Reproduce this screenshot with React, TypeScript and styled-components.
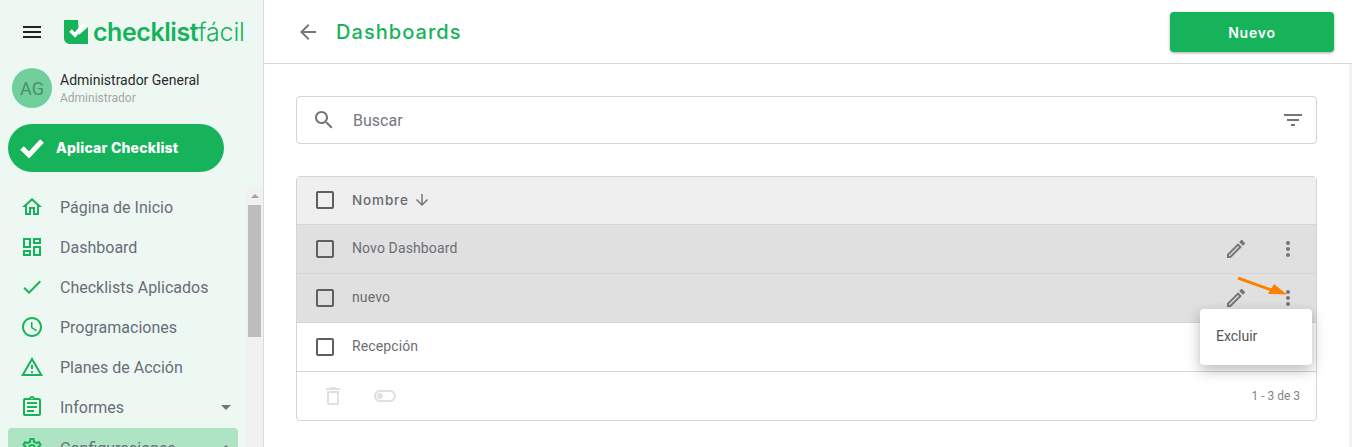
import { FC } from "react";
import styled, { createGlobalStyle } from "styled-components";

const GREEN = "#16b35b";

const paths = {
  menu: "M3 18h18v-2H3v2zm0-5h18v-2H3v2zm0-7v2h18V6H3z",
  home: "M12 5.69l5 4.5V18h-2v-6H9v6H7v-7.81l5-4.5M12 3L2 12h3v8h6v-6h2v6h6v-8h3L12 3z",
  dashboard:
    "M19 5v2h-4V5h4M9 5v6H5V5h4m10 8v6h-4v-6h4M9 17v2H5v-2h4M21 3h-8v6h8V3zM11 3H3v10h8V3zm10 8h-8v10h8V11zm-10 4H3v6h8v-6z",
  check: "M9 16.17L4.83 12l-1.42 1.41L9 19 21 7l-1.41-1.41z",
  clock:
    "M11.99 2C6.47 2 2 6.48 2 12s4.47 10 9.99 10C17.52 22 22 17.52 22 12S17.52 2 11.99 2zM12 20c-4.42 0-8-3.58-8-8s3.58-8 8-8 8 3.58 8 8-3.58 8-8 8zm.5-13H11v6l5.25 3.15.75-1.23-4.5-2.67z",
  warning:
    "M12 5.99L19.53 19H4.47L12 5.99M12 2L1 21h22L12 2zm1 14h-2v2h2v-2zm0-6h-2v4h2v-4z",
  report:
    "M7 15h7v2H7zm0-4h10v2H7zm0-4h10v2H7zm12-4h-4.18C14.4 1.84 13.3 1 12 1c-1.3 0-2.4.84-2.82 2H5c-.14 0-.27.01-.4.04-.39.08-.74.28-1.01.55-.18.18-.33.4-.43.64-.1.23-.16.49-.16.77v14c0 .27.06.54.16.78s.25.45.43.64c.27.27.62.47 1.01.55.13.02.26.03.4.03h14c1.1 0 2-.9 2-2V5c0-1.1-.9-2-2-2zm-7-.25c.41 0 .75.34.75.75s-.34.75-.75.75-.75-.34-.75-.75.34-.75.75-.75zM19 19H5V5h14v14z",
  settings:
    "M19.43 12.98c.04-.32.07-.64.07-.98 0-.34-.03-.66-.07-.98l2.11-1.65c.19-.15.24-.42.12-.64l-2-3.46c-.09-.16-.26-.25-.44-.25-.06 0-.12.01-.17.03l-2.49 1c-.52-.4-1.08-.73-1.69-.98l-.38-2.65C14.46 2.18 14.25 2 14 2h-4c-.25 0-.46.18-.49.42l-.38 2.65c-.61.25-1.17.59-1.69.98l-2.49-1c-.06-.02-.12-.03-.18-.03-.17 0-.34.09-.43.25l-2 3.46c-.13.22-.07.49.12.64l2.11 1.65c-.04.32-.07.65-.07.98 0 .33.03.66.07.98l-2.11 1.65c-.19.15-.24.42-.12.64l2 3.46c.09.16.26.25.44.25.06 0 .12-.01.17-.03l2.49-1c.52.4 1.08.73 1.69.98l.38 2.65c.03.24.24.42.49.42h4c.25 0 .46-.18.49-.42l.38-2.65c.61-.25 1.17-.59 1.69-.98l2.49 1c.06.02.12.03.18.03.17 0 .34-.09.43-.25l2-3.46c.12-.22.07-.49-.12-.64l-2.11-1.65zm-1.98-1.71c.04.31.05.52.05.73 0 .21-.02.43-.05.73l-.14 1.13.89.7 1.08.84-.7 1.21-1.27-.51-1.04-.42-.9.68c-.43.32-.84.56-1.25.73l-1.06.43-.16 1.13-.2 1.35h-1.4l-.19-1.35-.16-1.13-1.06-.43c-.43-.18-.83-.41-1.23-.71l-.91-.7-1.06.43-1.27.51-.7-1.21 1.08-.84.89-.7-.14-1.13c-.03-.31-.05-.54-.05-.74s.02-.43.05-.73l.14-1.13-.89-.7-1.08-.84.7-1.21 1.27.51 1.04.42.9-.68c.43-.32.84-.56 1.25-.73l1.06-.43.16-1.13.2-1.35h1.39l.19 1.35.16 1.13 1.06.43c.43.18.83.41 1.23.71l.91.7 1.06-.43 1.27-.51.7 1.21-1.07.85-.89.7.14 1.13zM12 8c-2.21 0-4 1.79-4 4s1.79 4 4 4 4-1.79 4-4-1.79-4-4-4zm0 6c-1.1 0-2-.9-2-2s.9-2 2-2 2 .9 2 2-.9 2-2 2z",
  back: "M20 11H7.83l5.59-5.59L12 4l-8 8 8 8 1.41-1.41L7.83 13H20v-2z",
  search:
    "M15.5 14h-.79l-.28-.27C15.41 12.59 16 11.11 16 9.5 16 5.91 13.09 3 9.5 3S3 5.91 3 9.5 5.91 16 9.5 16c1.61 0 3.09-.59 4.23-1.57l.27.28v.79l5 4.99L20.49 19l-4.99-5zm-6 0C7.01 14 5 11.99 5 9.5S7.01 5 9.5 5 14 7.01 14 9.5 11.99 14 9.5 14z",
  filter: "M10 18h4v-2h-4v2zM3 6v2h18V6H3zm3 7h12v-2H6v2z",
  down: "M20 12l-1.41-1.41L13 16.17V4h-2v12.17l-5.58-5.59L4 12l8 8 8-8z",
  edit: "M3 17.25V21h3.75L17.81 9.94l-3.75-3.75L3 17.25zM5.92 19H5v-.92l9.06-9.06.92.92L5.92 19zM20.71 7.04c.39-.39.39-1.02 0-1.41l-2.34-2.34c-.2-.2-.45-.29-.71-.29s-.51.1-.7.29l-1.83 1.83 3.75 3.75 1.83-1.83z",
  more: "M12 8c1.1 0 2-.9 2-2s-.9-2-2-2-2 .9-2 2 .9 2 2 2zm0 2c-1.1 0-2 .9-2 2s.9 2 2 2 2-.9 2-2-.9-2-2-2zm0 6c-1.1 0-2 .9-2 2s.9 2 2 2 2-.9 2-2-.9-2-2-2z",
  trash:
    "M6 19c0 1.1.9 2 2 2h8c1.1 0 2-.9 2-2V7H6v12zM8 9h8v10H8V9zm7.5-5l-1-1h-5l-1 1H5v2h14V4z",
  toggle:
    "M17 6H7c-3.31 0-6 2.69-6 6s2.69 6 6 6h10c3.31 0 6-2.69 6-6s-2.69-6-6-6zm0 10H7c-2.21 0-4-1.79-4-4s1.79-4 4-4h10c2.21 0 4 1.79 4 4s-1.79 4-4 4zM7 9c-1.66 0-3 1.34-3 3s1.34 3 3 3 3-1.34 3-3-1.34-3-3-3z",
  box: "M19 5v14H5V5h14m0-2H5c-1.1 0-2 .9-2 2v14c0 1.1.9 2 2 2h14c1.1 0 2-.9 2-2V5c0-1.1-.9-2-2-2z",
  caretDown: "M7 10l5 5 5-5z",
  caretUp: "M7 14l5-5 5 5z",
};

const GlobalStyle = createGlobalStyle`
  html, body {
    margin: 0;
    height: 100%;
    overflow: hidden;
    background: #fff;
    font-family: Roboto, "Liberation Sans", sans-serif;
  }
`;

const Page = styled.div`
  display: flex;
  width: 1352px;
  height: 447px;
  overflow: hidden;
`;

const Sidebar = styled.aside`
  flex: 0 0 264px;
  box-sizing: border-box;
  height: 447px;
  background: #eef8f3;
  border-right: 1px solid #dcdcdc;
  display: flex;
  flex-direction: column;
  overflow: hidden;
`;

const Brand = styled.div`
  height: 64px;
  flex: none;
  display: flex;
  align-items: center;
  padding-left: 20px;
  gap: 20px;
`;

const Logo = styled.div`
  display: flex;
  align-items: center;
  gap: 5px;
`;

const LogoText = styled.span`
  font-family: Inter, sans-serif;
  font-size: 25px;
  font-weight: 600;
  letter-spacing: -0.45px;
  color: ${GREEN};

  b {
    font-weight: 300;
    letter-spacing: -0.2px;
  }
`;

const Svg = styled.svg<{ $size?: number; $color: string }>`
  display: block;
  flex: none;
  width: ${(p) => p.$size ?? 24}px;
  height: ${(p) => p.$size ?? 24}px;
  fill: ${(p) => p.$color};
`;

const Icon: FC<{ d: string; size?: number; color: string }> = ({ d, size, color }) => (
  <Svg viewBox="0 0 24 24" $size={size} $color={color}>
    <path d={d} />
  </Svg>
);

const UserRow = styled.div`
  display: flex;
  align-items: center;
  gap: 8px;
  padding: 4px 0 0 12px;
`;

const Avatar = styled.div`
  width: 40px;
  height: 40px;
  border-radius: 50%;
  background: #70cf9a;
  color: #4a8f69;
  font-size: 18px;
  display: flex;
  align-items: center;
  justify-content: center;
`;

const UserName = styled.div`
  font-size: 14px;
  line-height: 18px;
  color: #2b2b2b;
`;

const UserRole = styled.div`
  font-size: 12px;
  line-height: 16px;
  margin-top: 1px;
  color: #a3a8a6;
`;

const ApplyButton = styled.div`
  margin: 16px 0 0 8px;
  width: 216px;
  height: 48px;
  flex: none;
  border-radius: 24px;
  background: ${GREEN};
  color: #fff;
  font-family: Inter, sans-serif;
  font-weight: 800;
  font-size: 14px;
  letter-spacing: 0.2px;
  display: flex;
  align-items: center;
  padding: 0 0 1px 12px;
  box-sizing: border-box;
  gap: 12px;
`;

const NavArea = styled.div`
  margin-top: 15px;
  flex: 1;
  display: flex;
  min-height: 0;
`;

const NavList = styled.nav`
  flex: 1;
  min-width: 0;
  padding-right: 8px;
`;

const NavItem = styled.div<{ $active?: boolean }>`
  height: 40px;
  margin-left: 8px;
  padding: 0 0 0 12px;
  display: flex;
  align-items: center;
  gap: 16px;
  border-radius: 4px;
  font-size: 16px;
  color: #666e78;
  background: ${(p) => (p.$active ? "#aee3c3" : "transparent")};
  margin-top: ${(p) => (p.$active ? "1px" : "0")};
`;

const NavLabel = styled.span`
  flex: 1;
`;

const ScrollTrack = styled.div`
  flex: 0 0 17px;
  margin-top: 1px;
  background: #f1f1f1;
  display: flex;
  flex-direction: column;
  align-items: center;
`;

const ScrollArrow = styled.div`
  margin-top: 6px;
  width: 0;
  height: 0;
  border-left: 4px solid transparent;
  border-right: 4px solid transparent;
  border-bottom: 4px solid #a3a3a3;
`;

const ScrollThumb = styled.div`
  margin-top: 7px;
  width: 13px;
  height: 132px;
  background: #bdbdbd;
`;

const Main = styled.main`
  flex: 1;
  min-width: 0;
  display: flex;
  flex-direction: column;
`;

const TopBar = styled.header`
  height: 64px;
  flex: none;
  box-sizing: border-box;
  border-bottom: 1px solid #d9d9d9;
  display: flex;
  align-items: center;
  padding: 0 18px 0 32px;
  gap: 16px;
`;

const Title = styled.h1`
  flex: 1;
  margin: 0;
  font-family: Inter, sans-serif;
  font-size: 20px;
  font-weight: 500;
  letter-spacing: 1.05px;
  color: ${GREEN};
`;

const NewButton = styled.div`
  width: 164px;
  height: 40px;
  margin-top: 1px;
  border-radius: 4px;
  background: ${GREEN};
  color: #fff;
  font-family: Inter, sans-serif;
  font-weight: 600;
  font-size: 14px;
  letter-spacing: 0.8px;
  display: flex;
  align-items: center;
  justify-content: center;
  box-shadow: 0 1px 3px rgba(0, 0, 0, 0.35);
`;

const Body = styled.div`
  flex: 1;
  display: flex;
  min-height: 0;
`;

const Content = styled.div`
  flex: 1;
  min-width: 0;
  padding: 32px 32px 0 32px;
`;

const PageScrollTrack = styled.div`
  flex: 0 0 3px;
  background: #f4f4f4;
`;

const SearchBox = styled.div`
  height: 48px;
  box-sizing: border-box;
  border: 1px solid #d5d5d5;
  border-radius: 4px;
  display: flex;
  align-items: center;
  padding: 0 11px 0 15px;
`;

const SearchText = styled.span`
  flex: 1;
  margin-left: 17px;
  font-size: 16px;
  color: #72787e;
`;

const TableCard = styled.div`
  position: relative;
  margin-top: 32px;
  box-sizing: border-box;
  border: 1px solid #d5d5d5;
  border-radius: 4px;
`;

const Row = styled.div<{ $tone: "head" | "selected" | "plain" }>`
  height: ${(p) => (p.$tone === "head" ? "48px" : "49px")};
  box-sizing: border-box;
  display: flex;
  align-items: center;
  padding: 0 16px ${(p) => (p.$tone === "head" ? "2px" : "0")};
  gap: 15px;
  border-bottom: 1px solid #d5d5d5;
  background: ${(p) =>
    p.$tone === "head" ? "#efefef" : p.$tone === "selected" ? "#e0e0e0" : "#fff"};
`;

const HeadLabel = styled.span`
  font-family: Inter, sans-serif;
  font-size: 13.5px;
  font-weight: 500;
  letter-spacing: 0.85px;
  color: #666b72;
`;

const HeadCell = styled.div`
  flex: 1;
  display: flex;
  align-items: center;
  gap: 4px;
`;

const CellText = styled.span`
  flex: 1;
  font-size: 14px;
  line-height: 18px;
  padding-bottom: 2px;
  letter-spacing: 0.12px;
  color: #6a6f75;
`;

const Actions = styled.div`
  display: flex;
  gap: 28px;
`;

const TableFooter = styled.div`
  height: 48px;
  display: flex;
  align-items: center;
  padding: 0 16px 0 24px;
  gap: 28px;
`;

const Pagination = styled.span`
  margin-left: auto;
  font-size: 12px;
  color: #80858a;
`;

const RowMenu = styled.div`
  position: absolute;
  top: 132px;
  right: 4px;
  width: 112px;
  height: 56px;
  box-sizing: border-box;
  background: #fff;
  border-radius: 4px;
  box-shadow: 0 5px 14px rgba(0, 0, 0, 0.28);
  display: flex;
  align-items: center;
  padding: 0 0 2px 16px;
  font-size: 14px;
  color: #555;
`;

const Pointer = styled.svg`
  position: absolute;
  top: 100px;
  right: 26px;
  width: 54px;
  height: 22px;
`;

const navItems = [
  { label: "Página de Inicio", d: paths.home },
  { label: "Dashboard", d: paths.dashboard },
  { label: "Checklists Aplicados", d: paths.check },
  { label: "Programaciones", d: paths.clock },
  { label: "Planes de Acción", d: paths.warning },
  { label: "Informes", d: paths.report, caret: paths.caretDown },
  { label: "Configuraciones", d: paths.settings, caret: paths.caretUp, active: true },
];

const rows = [
  { name: "Novo Dashboard", selected: true },
  { name: "nuevo", selected: true },
  { name: "Recepción", selected: false },
];

const App: FC = () => {
  return (
    <>
      <GlobalStyle />
      <Page>
        <Sidebar>
          <Brand>
            <Icon d={paths.menu} color="#222" />
            <Logo>
              <svg width="24" height="24" viewBox="0 0 24 24">
                <path d="M0 0H24V24H6C2.5 24 0 21.5 0 18Z" fill={GREEN} />
                <path d="M14 0H24V7L15 15Z" fill="#eef8f3" />
                <path
                  d="M6.5 10.5L11 15L20 4"
                  fill="none"
                  stroke="#fff"
                  strokeWidth="3.6"
                />
              </svg>
              <LogoText>
                checklist<b>fácil</b>
              </LogoText>
            </Logo>
          </Brand>
          <UserRow>
            <Avatar>AG</Avatar>
            <div>
              <UserName>Administrador General</UserName>
              <UserRole>Administrador</UserRole>
            </div>
          </UserRow>
          <ApplyButton>
            <svg width="24" height="24" viewBox="0 0 24 24">
              <path
                d="M2 12L9 19L22 5"
                fill="none"
                stroke="#fff"
                strokeWidth="5"
              />
            </svg>
            Aplicar Checklist
          </ApplyButton>
          <NavArea>
            <NavList>
              {navItems.map((item) => (
                <NavItem key={item.label} $active={item.active}>
                  <Icon d={item.d} color={GREEN} />
                  <NavLabel>{item.label}</NavLabel>
                  {item.caret && <Icon d={item.caret} color="#757575" />}
                </NavItem>
              ))}
            </NavList>
            <ScrollTrack>
              <ScrollArrow />
              <ScrollThumb />
            </ScrollTrack>
          </NavArea>
        </Sidebar>
        <Main>
          <TopBar>
            <Icon d={paths.back} color="#777" />
            <Title>Dashboards</Title>
            <NewButton>Nuevo</NewButton>
          </TopBar>
          <Body>
            <Content>
              <SearchBox>
                <Icon d={paths.search} color="#757575" />
                <SearchText>Buscar</SearchText>
                <Icon d={paths.filter} color="#757575" />
              </SearchBox>
              <TableCard>
                <Row $tone="head">
                  <Icon d={paths.box} color="#5f5f5f" />
                  <HeadCell>
                    <HeadLabel>Nombre</HeadLabel>
                    <Icon d={paths.down} size={18} color="#757575" />
                  </HeadCell>
                </Row>
                {rows.map((row) => (
                  <Row key={row.name} $tone={row.selected ? "selected" : "plain"}>
                    <Icon d={paths.box} color="#5f5f5f" />
                    <CellText>{row.name}</CellText>
                    {row.selected && (
                      <Actions>
                        <Icon d={paths.edit} color="#757575" />
                        <Icon d={paths.more} color="#757575" />
                      </Actions>
                    )}
                  </Row>
                ))}
                <TableFooter>
                  <Icon d={paths.trash} color="#e0e0e0" />
                  <Icon d={paths.toggle} color="#e0e0e0" />
                  <Pagination>1 - 3 de 3</Pagination>
                </TableFooter>
                <Pointer viewBox="0 0 54 22">
                  <path d="M2 1L38 14" stroke="#fb8200" strokeWidth="3" fill="none" />
                  <path d="M51 17.5L32 17L38 7Z" fill="#fb8200" />
                </Pointer>
                <RowMenu>Excluir</RowMenu>
              </TableCard>
            </Content>
            <PageScrollTrack />
          </Body>
        </Main>
      </Page>
    </>
  );
};

export default App;
